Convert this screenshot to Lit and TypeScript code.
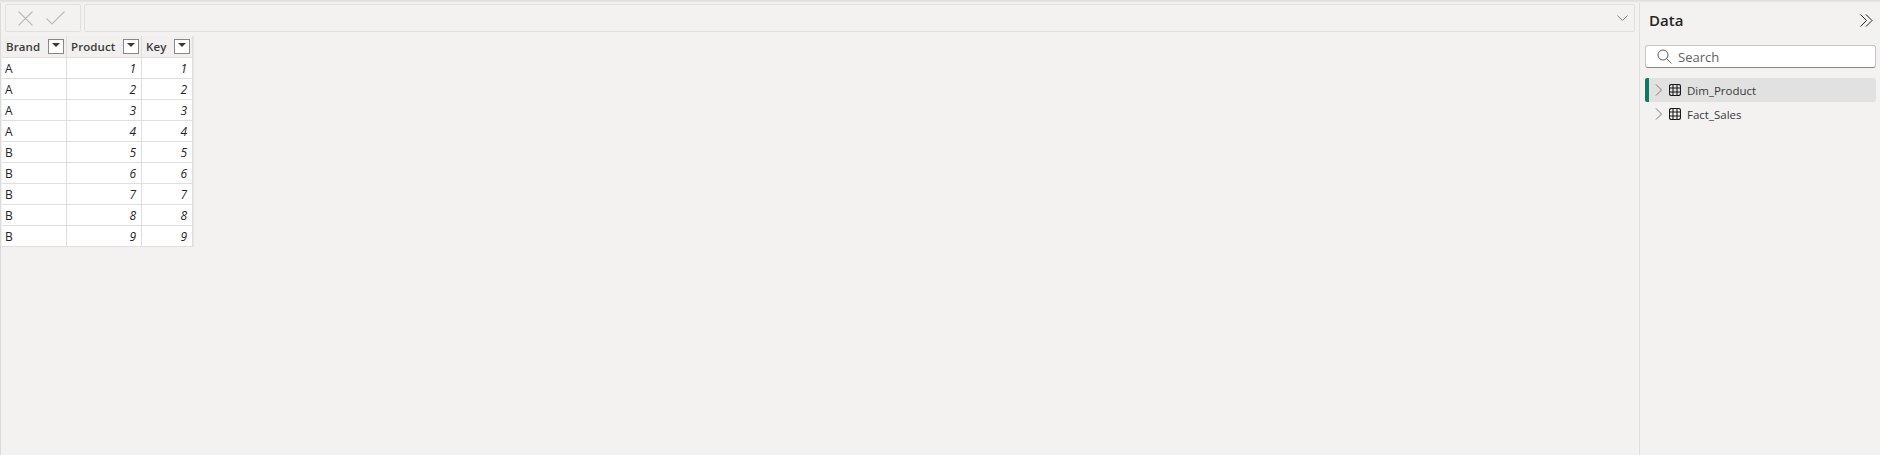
import { LitElement, html, css, svg } from "lit";
import { customElement } from "lit/decorators.js";

const rows: [string, number][] = [["A",1],["A",2],["A",3],["A",4],["B",5],["B",6],["B",7],["B",8],["B",9]];
const tableIcon = svg`<svg class="tbl" width="12" height="12" viewBox="0 0 12 12" fill="none" stroke="#1b1a19" stroke-width="1.1"><rect x="0.5" y="0.5" width="11" height="11" rx="2"/><path d="M4 .5v11M8 .5v11M.5 4h11M.5 8h11"/></svg>`;
const chev = svg`<svg class="chev" width="8" height="12" viewBox="0 0 8 12" fill="none" stroke="#7a7876" stroke-width="1"><path d="M1 .5 6.500 6 1 11.500"/></svg>`;

@customElement("app-root")
export class AppRoot extends LitElement {
  static styles = css`
    :host { display: block; width: 1880px; height: 455px; overflow: hidden; background: #f3f2f1; font-family: "Open Sans", "Noto Sans", sans-serif; color: #252423; position: relative; }
    .page { display: flex; height: 455px; box-sizing: border-box; }
    .shadow { position: absolute; left: 0; right: 0; top: 0; height: 3px; background: linear-gradient(#dcdbda, #f3f2f1); }
    .main { width: 1640px; box-sizing: border-box; border-left: 1px solid #dcdbda; border-right: 1px solid #e1dfdd; padding-top: 4px; flex: none; }
    .fbar { display: flex; gap: 3px; padding-left: 4px; padding-right: 4px; height: 28px; }
    .btns { width: 76px; box-sizing: border-box; border: 1px solid #e1dfdd; border-radius: 2px; display: flex; align-items: center; padding-left: 12px; gap: 13px; }
    .input { flex: 1; box-sizing: border-box; border: 1px solid #e1dfdd; border-radius: 2px; display: flex; align-items: center; justify-content: flex-end; padding-right: 6px; }
    .grid { margin: 4px 0 0 1px; display: grid; grid-template-columns: 65px 75px 51px; width: 192px; background: #e6e5e4; padding-right: 1px; box-sizing: border-box; }
    .h { height: 22px; box-sizing: border-box; background: #f1f0ef; border-right: 1px solid #e0dfde; border-bottom: 1px solid #e0dfde; display: flex; align-items: center; justify-content: space-between; padding: 0 2px 1px 4px; font: 600 11.5px "Open Sans", sans-serif; color: #3b3a39; letter-spacing: 0.1px; }
    .filt { width: 16px; height: 15px; box-sizing: border-box; border: 1px solid #8a8886; background: #fff; display: flex; align-items: center; justify-content: center; flex: none; }
    .filt i { display: block; width: 0; height: 0; border-left: 4px solid transparent; border-right: 4px solid transparent; border-top: 4px solid #3b3a39; margin-bottom: 2px; }
    .c { height: 21px; box-sizing: border-box; background: #fff; border-right: 1px solid #e0dfde; border-bottom: 1px solid #e0dfde; display: flex; align-items: center; font-size: 12px; padding: 0 3px; color: #252423; }
    .c.n { justify-content: flex-end; font-style: italic; padding-right: 5px; }
    .side { flex: 1; padding: 0 4px 0 5px; box-sizing: border-box; }
    .shead { height: 40px; display: flex; align-items: center; justify-content: space-between; padding: 0 3px 0 4px; box-sizing: border-box; }
    .title { font-size: 15px; font-weight: 600; color: #252423; }
    .search { margin-top: 5px; height: 23px; box-sizing: border-box; background: #fff; border: 1px solid #c8c6c4; border-bottom-color: #8a8886; border-radius: 3px; display: flex; align-items: center; padding-left: 11px; gap: 6px; font-size: 13px; color: #605e5c; width: 231px; }
    .tree { margin-top: 10px; width: 231px; }
    .row { height: 24px; display: flex; align-items: center; font-size: 11.5px; color: #3b3a39; padding-left: 10px; box-sizing: border-box; border-radius: 3px; }
    .row.sel { background: #e1e1e1; position: relative; }
    .row.sel::before { content: ""; position: absolute; left: 0; top: 0; bottom: 0; width: 4px; background: #0e7a64; border-radius: 2px 0 0 2px; }
    .chev { margin-right: 6px; flex: none; }
    .tbl { margin-right: 6px; flex: none; }
  `;

  render() {
    return html`
      <div class="page">
        <div class="main">
          <div class="fbar">
            <div class="btns">
              <svg width="15" height="15" viewBox="0 0 15 15" fill="none" stroke="#bcbbb9" stroke-width="1.1"><path d="M.5.5l14 14M14.500.5l-14 14"/></svg>
              <svg width="19" height="14" viewBox="0 0 19 14" fill="none" stroke="#bcbbb9" stroke-width="1.1"><path d="M.5 7.500 6 13 18.500.5"/></svg>
            </div>
            <div class="input">
              <svg width="11" height="6" viewBox="0 0 11 6" fill="none" stroke="#8a8886" stroke-width="1"><path d="M.5.5 5.500 5.500 10.500.5"/></svg>
            </div>
          </div>
          <div class="grid">
            ${["Brand", "Product", "Key"].map((t) => html`<div class="h"><span>${t}</span><span class="filt"><i></i></span></div>`)}
            ${rows.map(([b, n]) => html`
              <div class="c">${b}</div>
              <div class="c n">${n}</div>
              <div class="c n">${n}</div>`)}
          </div>
        </div>
        <div class="side">
          <div class="shead">
            <span class="title">Data</span>
            <svg width="13" height="13" viewBox="0 0 13 13" fill="none" stroke="#252423" stroke-width="1"><path d="M.5.5 6.500 6.500.5 12.500M6 .5 12 6.500 6 12.500"/></svg>
          </div>
          <div class="search">
            <svg width="15" height="15" viewBox="0 0 15 15" fill="none" stroke="#605e5c" stroke-width="1"><circle cx="6" cy="6" r="5"/><path d="M9.500 9.500 14.500 14.500"/></svg>
            <span>Search</span>
          </div>
          <div class="tree">
            <div class="row sel">${chev}${tableIcon}<span>Dim_Product</span></div>
            <div class="row">${chev}${tableIcon}<span>Fact_Sales</span></div>
          </div>
        </div>
        <div class="shadow"></div>
      </div>
    `;
  }
}
